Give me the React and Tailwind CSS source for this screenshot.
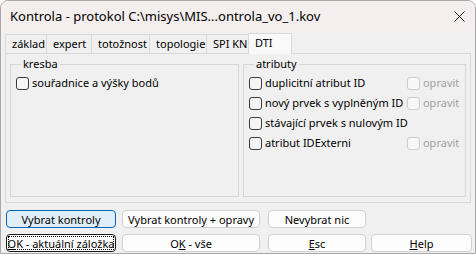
import React from 'react';

const tabs = [
    { name: 'základ', w: 'w-[41px]' },
    { name: 'expert', w: 'w-[45px]' },
    { name: 'totožnost', w: 'w-[58px]' },
    { name: 'topologie', w: 'w-[57px]' },
    { name: 'SPI KN', w: 'w-[42px]' },
];

function Box({ disabled }) {
    return (
        <span
            className={`inline-block w-[13px] h-[13px] rounded-[3px] border shrink-0 ${
                disabled ? 'border-[#cccccc] bg-[#f7f7f7]' : 'border-[#3c3c3c] bg-[#f5f5f5]'
            }`}
        />
    );
}

function Check({ label, disabled }) {
    return (
        <div className="flex items-center h-[20px] whitespace-nowrap">
            <Box disabled={disabled} />
            <span className={`ml-[3px] ${disabled ? 'text-[#a0a0a0]' : 'text-black'}`}>{label}</span>
        </div>
    );
}

function Btn({ children, w, primary, focus, className = '' }) {
    let cls = 'border-[#d0d0d0] bg-[#fdfdfd]';
    if (primary) cls = 'border-[#0067c0] bg-[#e0eef9]';
    if (focus) cls = 'border-[#1a1a1a] bg-[#fdfdfd]';
    return (
        <button className={`${w} h-[18px] shrink-0 rounded-[4px] border ${cls} flex items-center justify-center p-[1px] whitespace-nowrap ${className}`}>
            <span className={`w-full h-full flex items-center justify-center leading-none ${focus ? 'border border-dotted border-black' : ''}`}>
                {children}
            </span>
        </button>
    );
}

export default function App() {
    const attrs = [
        { label: 'duplicitní atribut ID', fix: true },
        { label: 'nový prvek s vyplněným ID', fix: true },
        { label: 'stávající prvek s nulovým ID', fix: false },
        { label: 'atribut IDExterni', fix: true },
    ];

    return (
        <div className="w-[476px] h-[254px] flex flex-col border border-[#a8a8a8] rounded-t-[8px] overflow-hidden bg-[#f0f0f0] text-[11px] text-black font-['Noto_Sans',sans-serif]">
            {/* title bar */}
            <div className="h-[31px] shrink-0 flex items-center justify-between pl-[9px] pr-[9px] bg-[#f4efee]">
                <span className="text-[13px] whitespace-nowrap">Kontrola - protokol C:\misys\MIS...ontrola_vo_1.kov</span>
                <svg width="11" height="11" viewBox="0 0 11 11" className="mr-[1px]">
                    <path d="M0.5 0.5 L10.5 10.5 M10.5 0.5 L0.5 10.5" stroke="#1a1a1a" strokeWidth="1" />
                </svg>
            </div>

            <div className="px-[4px] flex flex-col">
                {/* tabs */}
                <div className="flex items-end h-[21px] relative z-10">
                    {tabs.map((t) => (
                        <div key={t.name} className={`${t.w} h-[19px] shrink-0 whitespace-nowrap border-l border-t border-[#d9d9d9] bg-[#f0f0f0] px-[6px] leading-[18px]`}>
                            {t.name}
                        </div>
                    ))}
                    <div className="w-[44px] h-[21px] shrink-0 -mb-px border-l border-t border-r border-[#d9d9d9] bg-[#f9f9f9] px-[6px] leading-[18px]">
                        DTI
                    </div>
                </div>

                {/* panel */}
                <div className="h-[150px] border border-[#d9d9d9] bg-[#f0f0f0] flex gap-[4px] px-[4px] pt-[2px]">
                    <fieldset className="w-[231px] h-[141px] border border-[#d6d6d6] pl-[5px] pt-[1px]">
                        <legend className="ml-[5px] px-[2px] leading-[16px]">kresba</legend>
                        <Check label="souřadnice a výšky bodů" />
                    </fieldset>
                    <fieldset className="w-[225px] h-[141px] border border-[#d6d6d6] pl-[5px] pt-[1px]">
                        <legend className="ml-[5px] px-[2px] leading-[16px]">atributy</legend>
                        {attrs.map((a) => (
                            <div key={a.label} className="flex items-center">
                                <div className="w-[158px] shrink-0">
                                    <Check label={a.label} />
                                </div>
                                {a.fix && <Check label="opravit" disabled />}
                            </div>
                        ))}
                    </fieldset>
                </div>

                {/* buttons */}
                <div className="flex mt-[7px] ml-px">
                    <Btn w="w-[110px]" primary>Vybrat kontroly</Btn>
                    <Btn w="w-[138px]" className="ml-[6px]">Vybrat kontroly + opravy</Btn>
                    <Btn w="w-[98px]" className="ml-[8px]">Nevybrat nic</Btn>
                </div>
                <div className="flex mt-[6px] ml-px">
                    <Btn w="w-[110px]" focus><span><span className="underline">O</span>K - aktuální záložka</span></Btn>
                    <Btn w="w-[138px]" className="ml-[6px]"><span>O<span className="underline">K</span> - vše</span></Btn>
                    <Btn w="w-[98px]" className="ml-[8px]"><span><span className="underline">E</span>sc</span></Btn>
                    <Btn w="w-[101px]" className="ml-[5px]"><span><span className="underline">H</span>elp</span></Btn>
                </div>
            </div>
        </div>
    );
}
